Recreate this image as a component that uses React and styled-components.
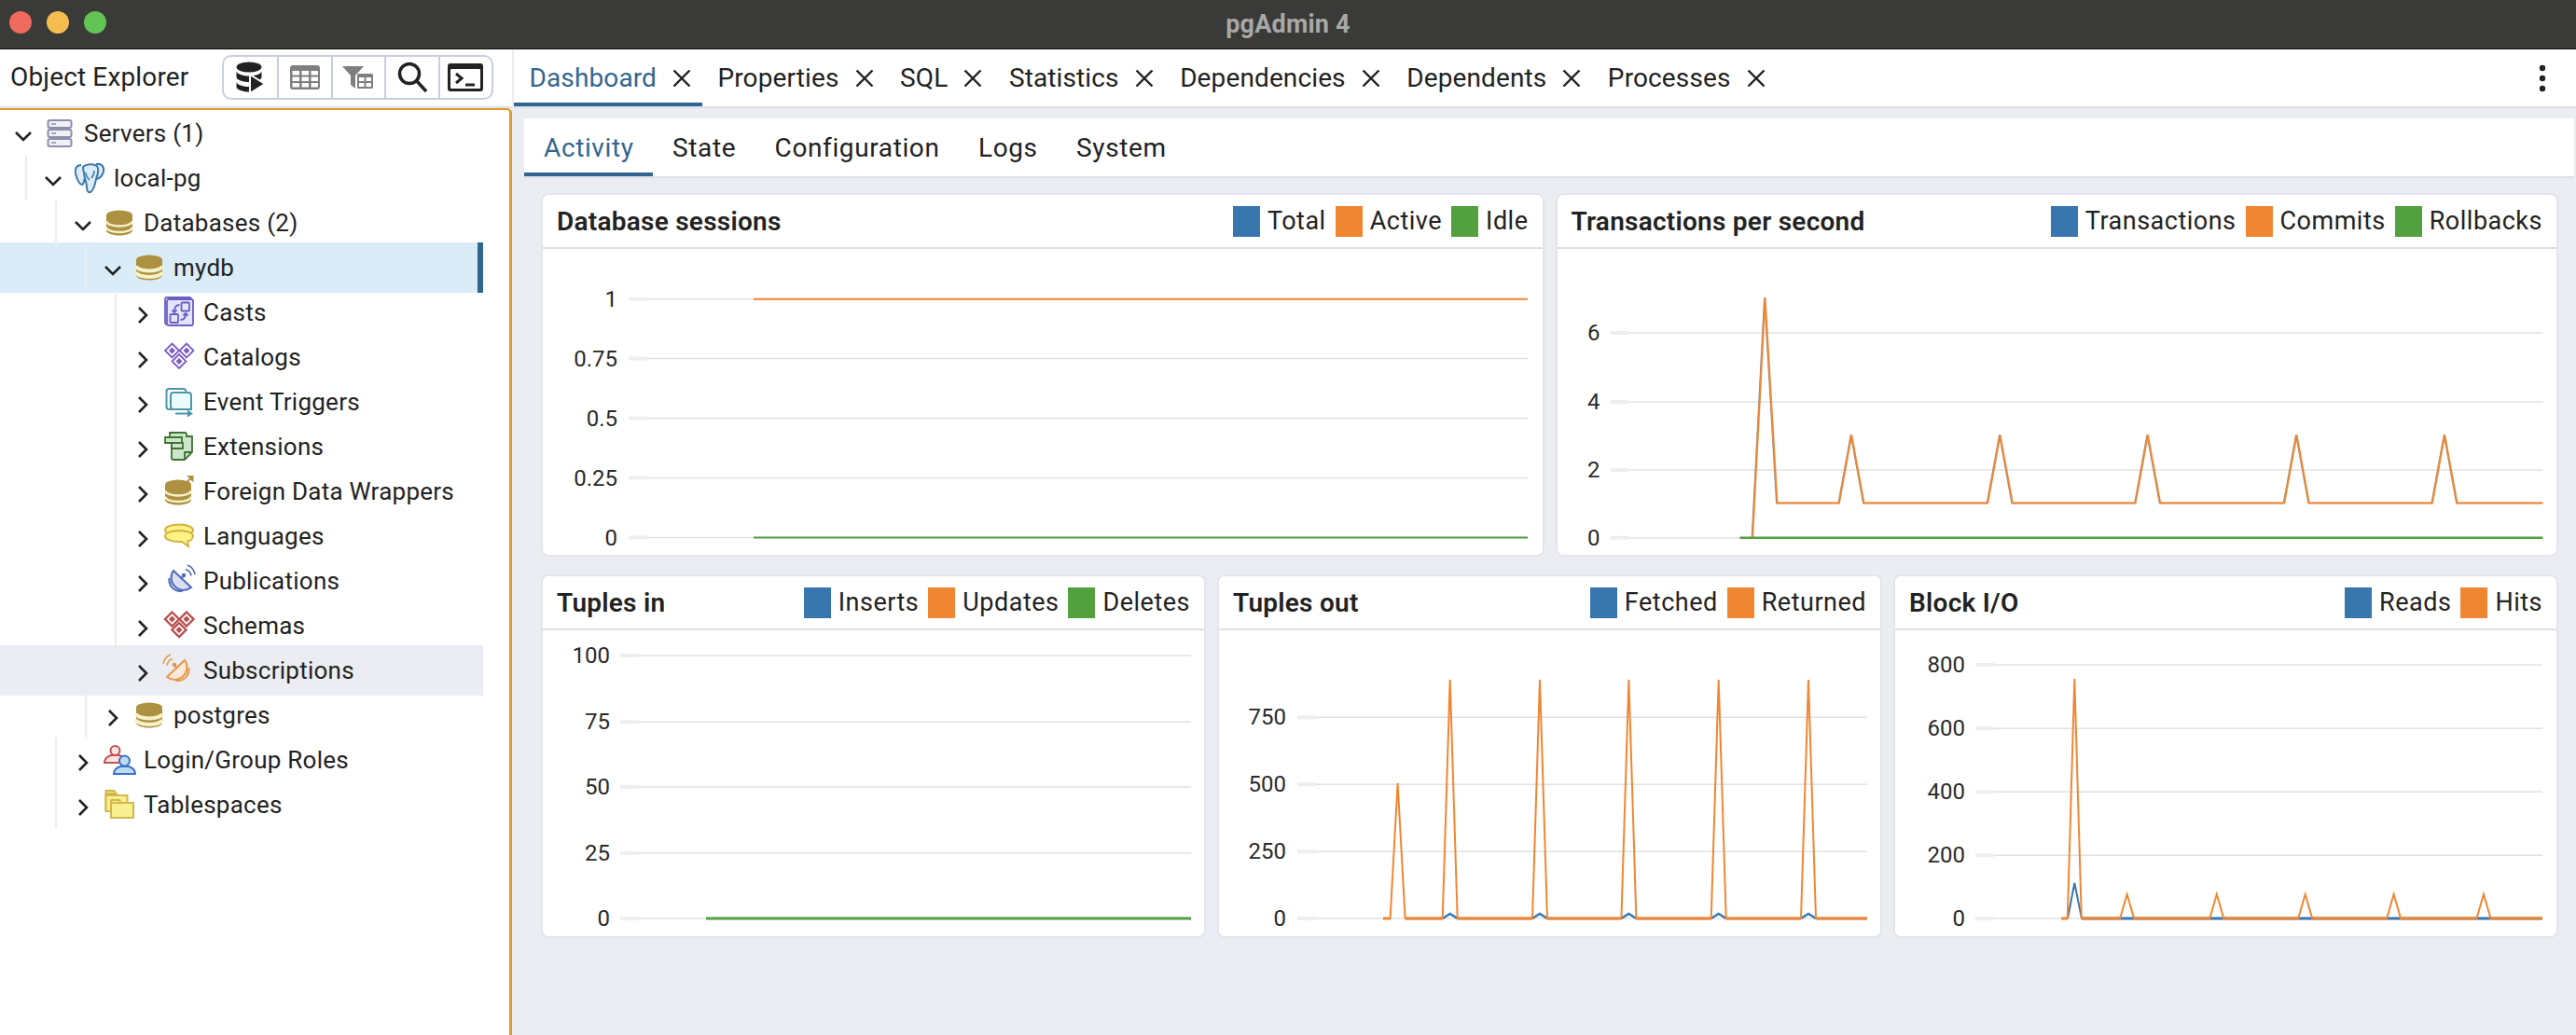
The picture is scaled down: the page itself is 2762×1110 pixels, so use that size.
import React from "react";
import styled, { createGlobalStyle } from "styled-components";

const GlobalStyle = createGlobalStyle`
  html, body { margin: 0; padding: 0; background: #ebedf2; }
  body { font-family: Roboto, "Liberation Sans", sans-serif; color: #222; }
  * { box-sizing: border-box; }
`;

const BLUE = "#3877ae";
const ORANGE = "#f18632";
const GREEN = "#53a03f";

const Page = styled.div`
  width: 2762px;
  height: 1110px;
  display: flex;
  flex-direction: column;
  overflow: hidden;
`;

const TitleBar = styled.header`
  position: relative;
  flex: 0 0 53px;
  display: flex;
  align-items: center;
  justify-content: center;
  background: #3a3a38;
  border-bottom: 1px solid #111;
`;

const Lights = styled.div`
  position: absolute;
  left: 10px;
  top: 12px;
  display: flex;
  gap: 16px;
`;

const Light = styled.span`
  width: 24px;
  height: 24px;
  border-radius: 50%;
  background: ${(p) => p.$color};
`;

const AppTitle = styled.div`
  font-size: 27px;
  font-weight: 700;
  letter-spacing: 0.2px;
  color: #a8a8a8;
`;

const Workspace = styled.div`
  flex: 1;
  min-height: 0;
  display: grid;
  grid-template-columns: 551px 1fr;
`;

const Sidebar = styled.aside`
  display: flex;
  flex-direction: column;
  min-height: 0;
  background: #fff;
  border-right: 2px solid #ebedf2;
`;

const ExplorerHeader = styled.div`
  flex: 0 0 63px;
  display: flex;
  align-items: center;
  justify-content: space-between;
  padding: 0 20px 2px 11px;
  border-bottom: 2px solid #dde0e6;
`;

const ExplorerTitle = styled.div`
  font-size: 28px;
  letter-spacing: 0.15px;
`;

const ToolGroup = styled.div`
  display: flex;
  height: 48px;
  border: 2px solid #c9cedb;
  border-radius: 10px;
`;

const ToolButton = styled.div`
  width: 57.5px;
  display: flex;
  align-items: center;
  justify-content: center;
  & + & {
    border-left: 2px solid #c9cedb;
  }
`;

const TreePanel = styled.div`
  flex: 1;
  padding-top: 1px;
  border-top: 2px solid #e09a32;
  border-right: 3px solid #e09a32;
  border-top-right-radius: 5px;
  isolation: isolate;
`;

const TreeRow = styled.div`
  position: relative;
  width: 518px;
  height: 48px;
  display: flex;
  align-items: center;
  &::before {
    content: "";
    display: ${(p) => (p.$selected || p.$hover ? "block" : "none")};
    position: absolute;
    inset: -3px 0;
    z-index: -1;
    background: ${(p) => (p.$selected ? "#d9ecf8" : "#ebedf2")};
    border-right: ${(p) => (p.$selected ? "6px solid #33668f" : "none")};
  }
`;

const Indent = styled.div`
  flex: 0 0 ${(p) => 8 + p.$level * 32}px;
  align-self: stretch;
  background: ${(p) =>
    p.$level > 0
      ? "linear-gradient(#ebedf2, #ebedf2) no-repeat right 11px top / 2px 100%"
      : "none"};
`;

const Toggle = styled.div`
  flex: 0 0 33px;
  display: flex;
  align-items: center;
  justify-content: center;
  margin-top: 5px;
`;

const NodeIcon = styled.svg`
  flex: 0 0 36px;
  width: 36px;
  height: 36px;
  margin-left: 5px;
  overflow: visible;
`;

const NodeLabel = styled.span`
  margin-left: 8px;
  font-size: 26px;
  letter-spacing: 0.25px;
  white-space: nowrap;
`;

const Main = styled.main`
  display: flex;
  flex-direction: column;
  min-width: 0;
  background: #ebedf2;
`;

const TabBar = styled.nav`
  flex: 0 0 63px;
  display: flex;
  background: #fff;
  border-bottom: 2px solid #dde0e6;
`;

const Tab = styled.div`
  display: flex;
  align-items: center;
  gap: 17px;
  padding: 0 12px 0 16.5px;
  font-size: 28px;
  letter-spacing: 0.12px;
  color: ${(p) => (p.$active ? "#326690" : "#222")};
  box-shadow: ${(p) => (p.$active ? "inset 0 -4px 0 #326690" : "none")};
`;

const Kebab = styled.svg`
  width: 12px;
  height: 32px;
  margin: auto 30px auto auto;
`;

const Dashboard = styled.div`
  flex: 1;
  min-height: 0;
  display: flex;
  flex-direction: column;
  margin: 11px 2px 0 11px;
`;

const SubTabBar = styled.nav`
  flex: 0 0 64px;
  display: flex;
  background: #fff;
  border-bottom: 2px solid #dde0e6;
`;

const SubTab = styled.div`
  display: flex;
  align-items: center;
  padding: 0 20.4px 0 21px;
  font-size: 28px;
  letter-spacing: 0.62px;
  color: ${(p) => (p.$active ? "#326690" : "#222")};
  box-shadow: ${(p) => (p.$active ? "inset 0 -4px 0 #326690" : "none")};
`;

const Charts = styled.div`
  display: flex;
  flex-direction: column;
  gap: 19px;
  padding: 16px 17px 0 18px;
`;

const ChartRow = styled.div`
  display: grid;
  grid-template-columns: repeat(${(p) => p.$cols}, 1fr);
  gap: 12px;
`;

const Card = styled.section`
  height: 390px;
  display: flex;
  flex-direction: column;
  background: #fff;
  border: 2px solid #e3e5ea;
  border-radius: 8px;
  overflow: hidden;
`;

const CardHeader = styled.div`
  flex: 0 0 58px;
  display: flex;
  align-items: center;
  justify-content: space-between;
  padding: 0 15px;
  border-bottom: 2px solid #dde0e6;
`;

const CardTitle = styled.h3`
  margin: 0;
  font-size: 28px;
  font-weight: 600;
  letter-spacing: 0.25px;
`;

const Legend = styled.div`
  display: flex;
  gap: 10px;
`;

const LegendItem = styled.div`
  display: flex;
  align-items: center;
  gap: 8px;
  font-size: 27px;
  letter-spacing: 0.5px;
`;

const Swatch = styled.span`
  width: 29px;
  height: 33px;
  background: ${(p) => p.$color};
`;

const Plot = styled.svg`
  display: block;
  flex: 1;
`;

// toolbar drawings

const QueryIcon = () => (
  <svg width="38" height="38" viewBox="0 0 38 38" fill="#222">
    <ellipse cx="18" cy="8" rx="13.5" ry="5.5" />
    <path d="M4.500 12c0 3 6 5.500 13.500 5.500S31.500 15 31.500 12v6.500c0 3-6 5.500-13.500 5.500S4.500 21.500 4.500 18.500z" />
    <path d="M4.500 23.500c0 3 6 5.500 13.500 5.500v5.500c-7.500 0-13.500-2.500-13.500-5.500z" />
    <polygon points="19,16 35,26 19,36" stroke="#fff" strokeWidth="2" />
  </svg>
);

const TableIcon = () => (
  <svg width="38" height="38" viewBox="0 0 38 38">
    <rect x="3" y="6" width="32" height="26" rx="3" fill="#7f7f7f" />
    {[12, 18.500, 25].map((y) =>
      [5.500, 15.500, 25.500].map((x) => (
        <rect key={`${x}-${y}`} x={x} y={y} width="7.500" height="4.500" fill="#fff" />
      ))
    )}
  </svg>
);

const FilterIcon = () => (
  <svg width="38" height="38" viewBox="0 0 38 38" fill="#7f7f7f">
    <polygon points="2,7 25,7 16,17 16,31 11,27 11,17" />
    <rect x="18" y="15" width="17" height="16" rx="1.500" />
    <g fill="#fff">
      <rect x="20" y="19" width="5.500" height="4" />
      <rect x="27.500" y="19" width="5.500" height="4" />
      <rect x="20" y="25" width="5.500" height="4" />
      <rect x="27.500" y="25" width="5.500" height="4" />
    </g>
  </svg>
);

const SearchIcon = () => (
  <svg width="38" height="38" viewBox="0 0 38 38" fill="none" stroke="#222" strokeWidth="3.500">
    <circle cx="16" cy="15" r="10.500" />
    <path d="M23.500 22.500L34 34" />
  </svg>
);

const TerminalIcon = () => (
  <svg width="38" height="38" viewBox="0 0 38 38">
    <rect x="0" y="4" width="38" height="30" rx="3" fill="#222" />
    <rect x="3" y="10" width="32" height="21" rx="1" fill="#fff" />
    <path d="M9 15l6 5-6 5" fill="none" stroke="#222" strokeWidth="3" />
    <path d="M19 27h10" fill="none" stroke="#222" strokeWidth="3" />
  </svg>
);

// tree drawings

const ServersDraw = () => (
  <g>
    {[4, 14, 24].map((y) => (
      <g key={y}>
        <rect x="5.500" y={y} width="25" height="8" rx="2" fill="#f1f1f5" stroke="#8c8fac" strokeWidth="2" />
        <path d={`M9 ${y + 4}h5`} stroke="#8c8fac" strokeWidth="1.500" />
      </g>
    ))}
  </g>
);

const ElephantDraw = () => (
  <g fill="#dcecf8" stroke="#3d78a8" strokeWidth="2" strokeLinejoin="round">
    <path d="M9 4C4 4 2 8 3 13c1 5 4 12 7 12 2 0 2-4 3-7" />
    <path d="M25 3c6-1 9 3 8 8-1 4-4 7-7 8" />
    <path d="M11 6c3-3 11-4 15-1 2 3 1 9-1 14-1 5-2 12-6 14-3 1-4-2-4-6 0-5-3-9-3-15-1-3-1-5-1-6z" />
    <path d="M14 12c0 4 2 6 4 8M23 10c0 3-1 6-3 8" fill="none" strokeWidth="1.500" />
  </g>
);

const DbDraw = ({ stripe = 2.500 }) => (
  <g>
    <path d="M4 10v16c0 3 6 5.500 14 5.500S32 29 32 26V10z" fill="#ad9141" />
    <ellipse cx="18" cy="10" rx="14" ry="5.500" fill="#ad9141" />
    <path d="M4 16c0 3 6 5.500 14 5.500S32 19 32 16" fill="none" stroke="#f7f2c9" strokeWidth={stripe} />
    <path d="M4 22.500c0 3 6 5.500 14 5.500s14-2.500 14-5.500" fill="none" stroke="#f7f2c9" strokeWidth={stripe} />
  </g>
);

const CastsDraw = () => (
  <g stroke="#6a5fc0" strokeWidth="1.800" fill="#e4e4fa">
    <rect x="3" y="2" width="28" height="29" rx="2" />
    <rect x="5" y="4" width="28" height="28" rx="2" />
    <rect x="20.500" y="7.500" width="8.500" height="9" rx="1" fill="none" />
    <rect x="8.500" y="20" width="8.500" height="9" rx="1" fill="none" />
    <path d="M13 17c0-5 2-7 5.500-7M25 20c0 4-2 6-5.500 6" fill="none" />
    <path d="M10.500 15.500l2.500 2.500 2.500-2.500M27.500 21.500L25 19l-2.500 2.500" fill="none" />
  </g>
);

const DiamondsDraw = ({ color, width = 1.800 }) => (
  <g>
    {[[10.500, 11], [26, 11], [18, 22.500]].map(([x, y]) => (
      <g key={`${x}-${y}`}>
        <path d={`M${x} ${y - 7.500}l7.500 7.500-7.500 7.500-7.500-7.500z`} fill="#fff" stroke={color} strokeWidth={width} />
        <path d={`M${x} ${y - 3.500}l3.500 3.500-3.500 3.500-3.500-3.500z`} fill={color} />
      </g>
    ))}
  </g>
);

const TriggersDraw = () => (
  <g stroke="#4f97a8" strokeWidth="2">
    <rect x="4.500" y="4" width="21" height="22" rx="3" fill="none" />
    <path d="M12 8h16a3 3 0 0 1 3 3v15H12a3 3 0 0 1-3-3V11a3 3 0 0 1 3-3z" fill="#eafcfb" />
    <path d="M14 30.500h13" fill="none" />
    <polygon points="27,26.500 33,30.500 27,34.500" fill="#4f97a8" strokeWidth="0" />
  </g>
);

const ExtensionsDraw = () => (
  <g stroke="#3d7232" strokeWidth="1.800" fill="#cde6cb">
    <path d="M8 3h16a2 2 0 0 1 2 2v2h6v17l-8 8H12a2 2 0 0 1-2-2V10H8z" />
    <path d="M3 8h18v6H3z" />
    <path d="M10 14h12v6H10z" />
    <path d="M24 32v-8h8" fill="none" />
  </g>
);

const FdwDraw = () => (
  <g>
    <g transform="translate(-1 1)">
      <DbDraw />
    </g>
    <path d="M25 9l7-6" stroke="#ad9141" strokeWidth="2.200" />
    <polygon points="26,1 33.500,1 33.500,8.500" fill="#ad9141" />
  </g>
);

const LanguagesDraw = () => (
  <g fill="#fdf386" stroke="#d5b13f" strokeWidth="2">
    <ellipse cx="18" cy="11.500" rx="15" ry="6" />
    <path d="M18 12c8 0 15 2.500 15 6 0 3-3 5-6 5.500l1 5.500-7-5c-1 0-2 0-3 0-8 0-15-2.500-15-6s7-6 15-6z" />
  </g>
);

const DishDraw = ({ stroke, fill, flip }) => (
  <g transform={flip ? "matrix(-1 0 0 1 36 0)" : undefined} fill="none" stroke={stroke} strokeWidth="2">
    <path d="M12 7l19 18A13.200 13.200 0 0 1 12 7z" fill={fill} />
    <path d="M7.500 15c-1 8 5 15 14 14" />
    <path d="M20 16l3-4" />
    <circle cx="23" cy="12" r="2.300" fill={stroke} stroke="none" />
    <path d="M25 5.500a9 9 0 0 1 6 7M27 1a13 13 0 0 1 8 10" strokeWidth="1.600" />
  </g>
);

const RolesDraw = () => (
  <g strokeWidth="2">
    <circle cx="13.500" cy="8" r="5" fill="#fbe3e1" stroke="#bd5353" />
    <path d="M2 21c0-5 4-7 7-8h9c3 1 7 3 7 8z" fill="#fbe3e1" stroke="#bd5353" />
    <circle cx="23.500" cy="19" r="5.500" fill="#bcdcf2" stroke="#3d72c0" />
    <path d="M12 33c0-5 4-7 7-8h9c3 1 7 3 7 8z" fill="#bcdcf2" stroke="#3d72c0" />
  </g>
);

const SpacesDraw = () => (
  <g fill="#f9f08f" stroke="#d2b84d" strokeWidth="2">
    <path d="M3.500 3h9l2 3h-11zM3.500 6h11v18h-11z" />
    <path d="M3.500 8h23v17h-23z" />
    <path d="M9 13h9l2 3h-11z" />
    <path d="M9 16h24v16H9z" />
  </g>
);

const treeNodes = [
  { level: 0, label: "Servers (1)", open: true, draw: <ServersDraw /> },
  { level: 1, label: "local-pg", open: true, draw: <ElephantDraw /> },
  { level: 2, label: "Databases (2)", open: true, draw: <DbDraw /> },
  { level: 3, label: "mydb", open: true, selected: true, draw: <DbDraw stripe={4} /> },
  { level: 4, label: "Casts", draw: <CastsDraw /> },
  { level: 4, label: "Catalogs", draw: <DiamondsDraw color="#7b5cc4" /> },
  { level: 4, label: "Event Triggers", draw: <TriggersDraw /> },
  { level: 4, label: "Extensions", draw: <ExtensionsDraw /> },
  { level: 4, label: "Foreign Data Wrappers", draw: <FdwDraw /> },
  { level: 4, label: "Languages", draw: <LanguagesDraw /> },
  { level: 4, label: "Publications", draw: <DishDraw stroke="#4e6bbb" fill="#dcdff2" /> },
  { level: 4, label: "Schemas", draw: <DiamondsDraw color="#b8504f" width={2.400} /> },
  { level: 4, label: "Subscriptions", hover: true, draw: <DishDraw stroke="#e59a4b" fill="#fbeadb" flip /> },
  { level: 3, label: "postgres", draw: <DbDraw stripe={4} /> },
  { level: 2, label: "Login/Group Roles", draw: <RolesDraw /> },
  { level: 2, label: "Tablespaces", draw: <SpacesDraw /> },
];

const Chevron = ({ open }) => (
  <svg width="20" height="20" viewBox="0 0 20 20" fill="none" stroke="#222" strokeWidth="2.600">
    <path d={open ? "M2 6l8 8 8-8" : "M6 2l8 8-8 8"} />
  </svg>
);

const CloseIcon = () => (
  <svg width="20" height="18" viewBox="0 0 20 18" fill="none" stroke="#222" strokeWidth="2.400">
    <path d="M1.500 0.500l17 17M18.500 0.500l-17 17" />
  </svg>
);

// chart data, all in page pixels

const spikes = (from, peaks, to, base, half) => {
  const pts = [[from, base]];
  peaks.forEach(([x, y]) => pts.push([x - half, base], [x, y], [x + half, base]));
  pts.push([to, base]);
  return pts;
};

const flat = (pairs, y) =>
  pairs.map(([a, b]) => ({ color: ORANGE, points: [[a, y], [b, y]], width: 3 }));

const txPoints = [
  [1878.600, 576.700],
  [1892, 319],
  ...spikes(
    1905,
    [1984.700, 2144, 2302.400, 2462, 2620.700].map((x) => [x, 466.400]),
    2726,
    539.500,
    13.300
  ),
];

const tupleOutPeaks = [1554.700, 1651, 1746.400, 1842.700, 1939];
const blockPeaks = [2280.600, 2376.800, 2471.700, 2566.600, 2663];

const charts = [
  [
    {
      title: "Database sessions",
      legend: [["Total", BLUE], ["Active", ORANGE], ["Idle", GREEN]],
      box: { x: 582, y: 267, w: 1071.500, h: 328 },
      labelX: 662,
      gridFrom: 674,
      gridTo: 1638,
      ticks: [["1", 320.700], ["0.75", 384.500], ["0.5", 448.500], ["0.25", 512.500], ["0", 576.500]],
      lines: [
        { color: ORANGE, points: [[808, 320.700], [1638, 320.700]] },
        { color: GREEN, points: [[808, 576.500], [1638, 576.500]] },
      ],
    },
    {
      title: "Transactions per second",
      legend: [["Transactions", BLUE], ["Commits", ORANGE], ["Rollbacks", GREEN]],
      box: { x: 1669.500, y: 267, w: 1071.500, h: 328 },
      labelX: 1715,
      gridFrom: 1726,
      gridTo: 2726,
      ticks: [["6", 357], ["4", 431], ["2", 504], ["0", 576.700]],
      lines: [
        { color: "#8a8f96", points: txPoints.map(([x, y]) => [x - 0.700, y]), width: 1.500 },
        { color: ORANGE, points: txPoints },
        { color: GREEN, points: [[1865, 576.700], [2726, 576.700]], width: 2.500 },
      ],
    },
  ],
  [
    {
      title: "Tuples in",
      legend: [["Inserts", BLUE], ["Updates", ORANGE], ["Deletes", GREEN]],
      box: { x: 582, y: 676, w: 709, h: 328 },
      labelX: 654,
      gridFrom: 665,
      gridTo: 1277,
      ticks: [["100", 703], ["75", 774.300], ["50", 844], ["25", 915], ["0", 985]],
      lines: [{ color: GREEN, points: [[757, 985], [1277, 985]], width: 3 }],
    },
    {
      title: "Tuples out",
      legend: [["Fetched", BLUE], ["Returned", ORANGE]],
      box: { x: 1307, y: 676, w: 709, h: 328 },
      labelX: 1379,
      gridFrom: 1391,
      gridTo: 2002,
      ticks: [["750", 769.300], ["500", 841.300], ["250", 913.300], ["0", 985]],
      lines: [
        { color: BLUE, points: spikes(1507, tupleOutPeaks.map((x) => [x, 980]), 2002, 985, 8), width: 2.500 },
        {
          color: ORANGE,
          points: spikes(1483, [[1498.600, 840], ...tupleOutPeaks.map((x) => [x, 729])], 2002, 985, 8),
        },
        ...flat(
          [[1483, 1491], [1507, 1547], [1563, 1643], [1659, 1738.400], [1754.400, 1834.700], [1850.700, 1931], [1947, 2002]],
          985
        ),
      ],
    },
    {
      title: "Block I/O",
      legend: [["Reads", BLUE], ["Hits", ORANGE]],
      box: { x: 2032, y: 676, w: 709, h: 328 },
      labelX: 2107,
      gridFrom: 2118,
      gridTo: 2726,
      ticks: [["800", 713], ["600", 781.300], ["400", 849.300], ["200", 917.300], ["0", 985]],
      lines: [
        { color: BLUE, points: [[2217, 985], [2224.300, 947], [2232, 985]] },
        { color: BLUE, points: [[2232, 985], [2726, 985]], width: 3 },
        {
          color: ORANGE,
          points: spikes(2210, [[2224.300, 728], ...blockPeaks.map((x) => [x, 959])], 2726, 985, 7.500),
        },
        ...flat(
          [[2210, 2217], [2232, 2273], [2288, 2369], [2384.500, 2464], [2479, 2559], [2574, 2655], [2670.500, 2726]],
          985
        ),
      ],
    },
  ],
];

const ChartCard = ({ chart }) => {
  const { box } = chart;
  return (
    <Card>
      <CardHeader>
        <CardTitle>{chart.title}</CardTitle>
        <Legend>
          {chart.legend.map(([name, color]) => (
            <LegendItem key={name}>
              <Swatch $color={color} />
              {name}
            </LegendItem>
          ))}
        </Legend>
      </CardHeader>
      <Plot viewBox={`${box.x} ${box.y} ${box.w} ${box.h}`} width={box.w} height={box.h}>
        {chart.ticks.map(([label, y]) => (
          <g key={label}>
            <text
              x={chart.labelX}
              y={y}
              textAnchor="end"
              dominantBaseline="central"
              fontSize="24"
              fontFamily="Roboto, sans-serif"
              fill="#2a2a2a"
            >
              {label}
            </text>
            <rect x={chart.gridFrom} y={y - 2} width="20" height="4" fill="#eeeeee" />
            <path d={`M${chart.gridFrom + 20} ${y}H${chart.gridTo}`} stroke="#e0e2e7" strokeWidth="1.500" />
          </g>
        ))}
        {chart.lines.map((line, i) => (
          <polyline
            key={i}
            points={line.points.map((p) => p.join(",")).join(" ")}
            fill="none"
            stroke={line.color}
            strokeWidth={line.width || 2}
            strokeLinejoin="miter"
          />
        ))}
      </Plot>
    </Card>
  );
};

const tabs = ["Dashboard", "Properties", "SQL", "Statistics", "Dependencies", "Dependents", "Processes"];
const subTabs = ["Activity", "State", "Configuration", "Logs", "System"];

export default function App() {
  return (
    <Page>
      <GlobalStyle />
      <TitleBar>
        <Lights>
          <Light $color="#ef6a5f" />
          <Light $color="#f5bc4f" />
          <Light $color="#62c454" />
        </Lights>
        <AppTitle>pgAdmin 4</AppTitle>
      </TitleBar>
      <Workspace>
        <Sidebar>
          <ExplorerHeader>
            <ExplorerTitle>Object Explorer</ExplorerTitle>
            <ToolGroup>
              <ToolButton><QueryIcon /></ToolButton>
              <ToolButton><TableIcon /></ToolButton>
              <ToolButton><FilterIcon /></ToolButton>
              <ToolButton><SearchIcon /></ToolButton>
              <ToolButton><TerminalIcon /></ToolButton>
            </ToolGroup>
          </ExplorerHeader>
          <TreePanel>
            {treeNodes.map((node) => (
              <TreeRow key={node.label} $selected={node.selected} $hover={node.hover}>
                <Indent $level={node.level} />
                <Toggle>
                  <Chevron open={node.open} />
                </Toggle>
                <NodeIcon viewBox="0 0 36 36">{node.draw}</NodeIcon>
                <NodeLabel>{node.label}</NodeLabel>
              </TreeRow>
            ))}
          </TreePanel>
        </Sidebar>
        <Main>
          <TabBar>
            {tabs.map((name, i) => (
              <Tab key={name} $active={i === 0}>
                {name}
                <CloseIcon />
              </Tab>
            ))}
            <Kebab viewBox="0 0 12 32" fill="#222">
              <circle cx="6" cy="5" r="3.200" />
              <circle cx="6" cy="16" r="3.200" />
              <circle cx="6" cy="27" r="3.200" />
            </Kebab>
          </TabBar>
          <Dashboard>
            <SubTabBar>
              {subTabs.map((name, i) => (
                <SubTab key={name} $active={i === 0}>{name}</SubTab>
              ))}
            </SubTabBar>
            <Charts>
              {charts.map((row, i) => (
                <ChartRow key={i} $cols={row.length}>
                  {row.map((chart) => (
                    <ChartCard key={chart.title} chart={chart} />
                  ))}
                </ChartRow>
              ))}
            </Charts>
          </Dashboard>
        </Main>
      </Workspace>
    </Page>
  );
}
